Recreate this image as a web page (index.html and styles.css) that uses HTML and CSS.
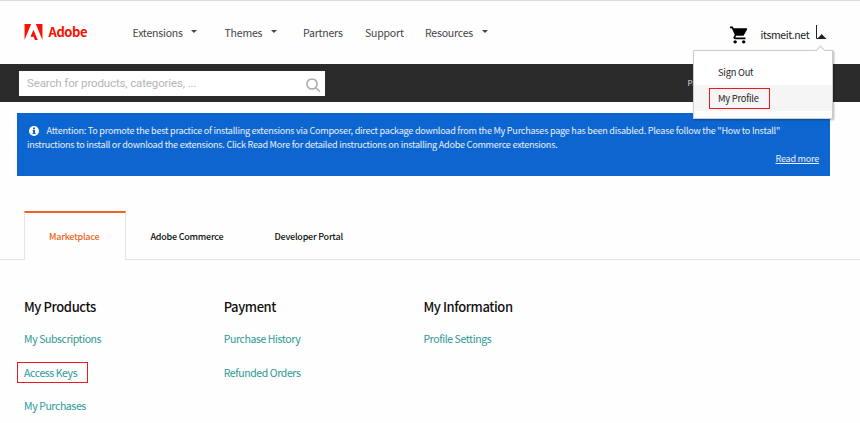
FILE: index.html
```html
<!DOCTYPE html>
<html lang="en">
<head>
<meta charset="utf-8">
<title>Adobe Commerce Marketplace</title>
<link rel="stylesheet" href="styles.css">
</head>
<body>
<header class="header">
  <a class="brand">
    <svg class="brand-mark" viewBox="0 0 19 17"><path fill="#fa0f00" d="M0 0h7L0 17zM12 0h7v17zM9.500 6.200L14 17h-3l-1.400-3.500H6.300z"/></svg>
    <span class="brand-name">Adobe</span>
  </a>
  <nav class="nav">
    <a class="nav-item">Extensions<i class="caret"></i></a>
    <a class="nav-item">Themes<i class="caret"></i></a>
    <a class="nav-item">Partners</a>
    <a class="nav-item">Support</a>
    <a class="nav-item">Resources<i class="caret"></i></a>
  </nav>
  <div class="account">
    <svg class="cart" viewBox="1 2 21 20"><path d="M7 18c-1.100 0-1.990.9-1.990 2S5.900 22 7 22s2-.9 2-2-.9-2-2-2zM1 2v2h2l3.600 7.590-1.350 2.450c-.16.280-.25.610-.25.960 0 1.100.9 2 2 2h12v-2H7.420c-.14 0-.25-.11-.25-.25l.03-.12.900-1.630h7.450c.75 0 1.410-.41 1.750-1.030l3.580-6.490A1 1 0 0 0 20 4H5.210l-.94-2H1zm16 16c-1.100 0-1.990.9-1.990 2s.89 2 1.990 2 2-.9 2-2-.9-2-2-2z"/></svg>
    <span class="user">itsmeit.net</span>
    <svg class="toggle" viewBox="0 0 11 15"><path d="M.5 0v13.500H10" fill="none" stroke="#222"/><path d="M1 14l4.700-5 4.700 5z" fill="#222"/></svg>
    <div class="menu">
      <a class="menu-item"><span>Sign Out</span></a>
      <a class="menu-item active"><span class="mark">My Profile</span></a>
    </div>
  </div>
</header>
<div class="bar">
  <div class="search">
    <span>Search for products, categories, ...</span>
    <svg class="glass" viewBox="0 0 15 15"><circle cx="6" cy="6" r="5.100"/><path d="M9.700 9.700l4.300 4" /></svg>
  </div>
  <span class="bar-link">Partners</span>
</div>
<main>
  <section class="notice">
    <p class="notice-line first"><svg class="info" viewBox="0 0 10 10"><circle cx="5" cy="5" r="5" fill="#fff"/><path d="M4 1.600h2v1.600H4zM3.600 4H6v3h.6v1.100H3.500V7H4V5h-.4z" fill="#0d66d0"/></svg>Attention: To promote the best practice of installing extensions via Composer, direct package download from the My Purchases page has been disabled. Please follow the "How to Install"</p>
    <p class="notice-line second">instructions to install or download the extensions. Click Read More for detailed instructions on installing Adobe Commerce extensions.</p>
    <a class="more">Read more</a>
  </section>
  <div class="tabs">
    <a class="tab selected"><span>Marketplace</span></a>
    <a class="tab commerce"><span>Adobe Commerce</span></a>
    <a class="tab portal"><span>Developer Portal</span></a>
  </div>
  <div class="columns">
    <section class="group">
      <h2 class="title">My Products</h2>
      <a class="link">My Subscriptions</a>
      <a class="link marked">Access Keys</a>
      <a class="link">My Purchases</a>
    </section>
    <section class="group">
      <h2 class="title">Payment</h2>
      <a class="link">Purchase History</a>
      <a class="link">Refunded Orders</a>
    </section>
    <section class="group">
      <h2 class="title">My Information</h2>
      <a class="link">Profile Settings</a>
    </section>
  </div>
</main>
</body>
</html>
```
FILE: styles.css
```css
*, *::before { box-sizing: border-box; }
body {
  margin: 0;
  height: 423px;
  overflow: hidden;
  background: #fefefe;
  font-family: "Noto Sans CJK SC", "Noto Sans", sans-serif;
  color: #222;
}
.header {
  height: 64px;
  display: flex;
  border-top: 1px solid #ddd;
  padding-left: 24px;
}
.brand { display: flex; width: 108.500px; padding-top: 23px; }
.brand-mark { width: 19px; height: 16px; }
.brand-name {
  margin-left: 5.500px;
  font-size: 13px;
  font-weight: 700;
  letter-spacing: -.45px;
  line-height: 16px;
  color: #fa0f00;
}
.nav {
  display: grid;
  grid-template-columns: 92px 78.500px 62px 60px 70.500px;
  font-size: 10.500px;
  letter-spacing: -.2px;
  line-height: 16px;
  padding-top: 24px;
  color: #444;
}
.nav-item { display: flex; align-items: flex-start; white-space: nowrap; }
.caret {
  margin: 5px 0 0 8.500px;
  border: 3px solid transparent;
  border-top: 3px solid #444;
  border-bottom: 0;
}
.account { position: relative; display: flex; margin-left: 234px; }
.cart { width: 18px; height: 18px; margin-top: 25px; fill: #000; }
.user { width: 55px; margin: 26px 0 0 13px; font-size: 10.500px; letter-spacing: -.4px; line-height: 16px; }
.toggle { width: 11px; height: 15px; margin-top: 24px; }
.menu {
  position: absolute;
  z-index: 2;
  left: -36.500px;
  top: 49px;
  width: 140px;
  height: 69px;
  padding-top: 8px;
  border: 1px solid #ccc;
  background: #fff;
  box-shadow: 1px 1px 2px rgba(0, 0, 0, .3);
  font-size: 9.300px;
  letter-spacing: -.22px;
  line-height: 26px;
}
.menu::before {
  content: "";
  position: absolute;
  right: 8px;
  top: -4px;
  width: 7px;
  height: 7px;
  border: solid #ccc;
  border-width: 1px 0 0 1px;
  background: #fff;
  transform: rotate(45deg);
}
.menu-item { display: block; height: 26px; padding-left: 24px; white-space: nowrap; }
.active { background: #f5f5f5; padding-top: 3px; }
.mark {
  display: block;
  width: 61px;
  height: 21px;
  margin-left: -9px;
  padding-left: 8px;
  border: 1.500px solid #f01820;
  line-height: 18px;
}
.bar {
  height: 38px;
  padding-top: 7px;
  display: flex;
  background: #2b2b2b;
}
.search {
  display: flex;
  justify-content: space-between;
  width: 306px;
  height: 25px;
  margin-left: 19px;
  padding: 0 4px 0 8px;
  background: #fff;
  color: #b5b5b5;
  font: 11.500px/25px Roboto, sans-serif;
  letter-spacing: -.13px;
}
.glass { width: 15px; height: 15px; margin-top: 7px; fill: none; stroke: #aaa; stroke-width: 1.500; }
.bar-link { margin-left: 362.500px; font-size: 8px; line-height: 24px; color: #ddd; }
.notice {
  width: 813px;
  height: 63px;
  margin: 11px 0 0 17px;
  padding: 10px 11px 0 10px;
  background: #0d66d0;
  color: #e8f0fb;
  font-size: 9.100px;
  letter-spacing: -.25px;
}
.notice-line { margin: 0; height: 14px; line-height: 14px; white-space: nowrap; }
.info { width: 10px; height: 10px; margin: 0 8px 0 1.500px; vertical-align: -2px; }
.more { display: block; text-align: right; text-decoration: underline; line-height: 15px; }
.tabs {
  display: flex;
  height: 49px;
  margin-top: 35px;
  padding-left: 24px;
  font-size: 9px;
  font-weight: 500;
  letter-spacing: -.23px;
  color: #111;
  box-shadow: inset 0 -1px #e5e5e5;
}
.tab { height: 49px; line-height: 52px; white-space: nowrap; }
.selected {
  width: 102px;
  padding-left: 24px;
  border: 1px solid #e5e5e5;
  border-top: 2px solid #f26322;
  border-bottom: 0;
  background: #fefefe;
  color: #f26322;
  line-height: 48px;
}
.commerce { width: 124px; padding-left: 24.500px; }
.portal { padding-left: 24.500px; }
.columns { display: grid; grid-template-columns: 199.700px 199.700px 200px; padding: 36.500px 0 0 24px; }
.title { margin: 0 0 12.500px; font-size: 13px; letter-spacing: -.42px; line-height: 20px; font-weight: 500; color: #111; }
.link {
  display: block;
  height: 20px;
  margin-bottom: 13.700px;
  font-size: 10.500px;
  letter-spacing: -.4px;
  line-height: 20px;
  color: #2c9894;
}
.marked {
  position: relative;
}
.marked::before {
  content: "";
  position: absolute;
  left: -7px;
  top: -1px;
  width: 71px;
  height: 21px;
  border: 1.500px solid #f01820;
}
```
